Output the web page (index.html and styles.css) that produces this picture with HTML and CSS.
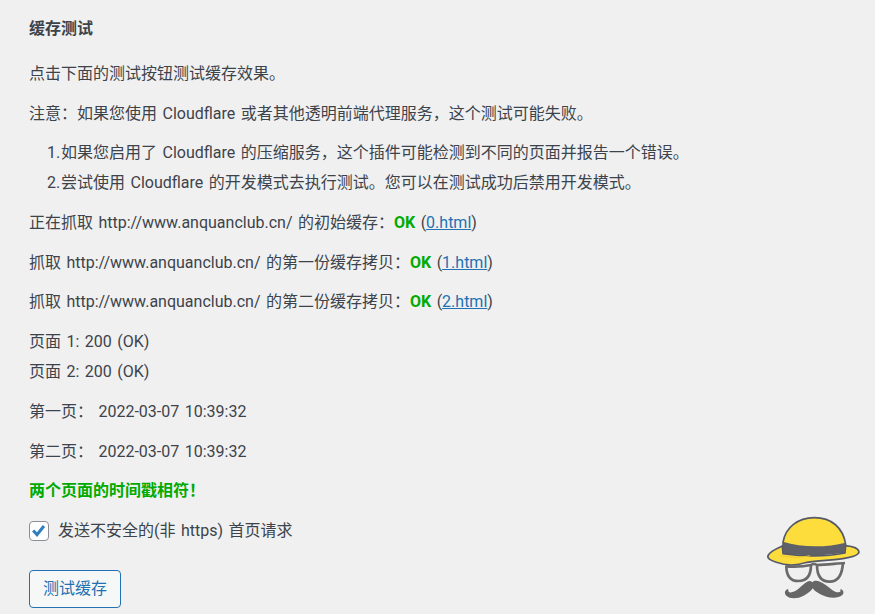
FILE: index.html
```html
<!DOCTYPE html>
<html>
<head>
<meta name="viewport" content="width=device-width, initial-scale=1.0">
<title>缓存测试</title>
<link rel="stylesheet" href="styles.css">
</head>
<body>
<div class="wrap">
  <h3 class="title">缓存测试</h3>
  <p>点击下面的测试按钮测试缓存效果。</p>
  <p>注意：如果您使用 Cloudflare 或者其他透明前端代理服务，这个测试可能失败。</p>
  <ol>
    <li>如果您启用了 Cloudflare 的压缩服务，这个插件可能检测到不同的页面并报告一个错误。</li>
    <li>尝试使用 Cloudflare 的开发模式去执行测试。您可以在测试成功后禁用开发模式。</li>
  </ol>
  <p>正在抓取 http://www.anquanclub.cn/ 的初始缓存：<span class="ok">OK</span> (<a href="#">0.html</a>)</p>
  <p>抓取 http://www.anquanclub.cn/ 的第一份缓存拷贝：<span class="ok">OK</span> (<a href="#">1.html</a>)</p>
  <p>抓取 http://www.anquanclub.cn/ 的第二份缓存拷贝：<span class="ok">OK</span> (<a href="#">2.html</a>)</p>
  <p>页面 1: 200 (OK)<br>页面 2: 200 (OK)</p>
  <p>第一页： 2022-03-07 10:39:32</p>
  <p>第二页： 2022-03-07 10:39:32</p>
  <p class="ok">两个页面的时间戳相符！</p>
  <p class="check-row">
    <span class="checkbox">
      <svg viewBox="0 0 20 20" width="18" height="18"><path d="M3.5 9.5 7.8 14 15.5 4.5" fill="none" stroke="#2f7fc1" stroke-width="3.4"/></svg>
    </span>
    <label>发送不安全的(非 https) 首页请求</label>
  </p>
  <button class="button">测试缓存</button>
</div>

<!-- hat logo, floats over the page corner -->
<svg class="logo" viewBox="0 0 360 327" width="120" height="109">
  <g fill="none" stroke="#6a6a6a" stroke-width="8">
    <path d="M94 182C94 212 106 228 130 228C156 228 168 210 168 180"/>
    <path d="M186 180C186 212 198 230 224 230C250 230 262 206 264 172"/>
    <path d="M92 184C120 186 150 184 168 180C174 176 180 176 186 180C210 180 240 176 270 174"/>
  </g>
  <path d="M84 112C92 66 128 39 178 38C230 38 264 68 272 118L270 142L86 146Z" fill="#fddd3c" stroke="#565a66" stroke-width="5"/>
  <path d="M82 122C78 127 50 134 40 150C34 160 46 166 64 172C92 182 126 182 156 172C190 166 236 166 268 160C292 156 312 150 312 140C310 130 292 124 272 122L270 144C210 156 140 154 84 146Z" fill="#fddd3c" stroke="#565a66" stroke-width="5" stroke-linejoin="round"/>
  <path d="M84 110C140 128 214 128 272 113L270 141C212 155 140 154 85 143Z" fill="#5f6068"/>
  <path d="M76 152C110 158 140 158 164 152" fill="none" stroke="#f2c92e" stroke-width="3"/>
  <path d="M172 232C182 222 196 230 212 240C226 250 238 262 250 262C256 262 258 258 256 252C266 254 268 264 262 270C246 284 214 278 196 268C186 262 178 258 173 250C168 258 160 264 146 272C128 282 104 282 94 272C86 264 90 254 100 252C98 258 102 264 110 262C124 260 134 248 146 238C156 230 164 224 172 232Z" fill="#666"/>
</svg>
</body>
</html>
```
FILE: styles.css
```css
* {box-sizing: border-box;}

html, body {
  height: 100%;
  margin: 0;
  overflow: hidden;
}

body {
  background: #f0f0f1;
  color: #3c434a;
  font-family: Roboto, "Noto Sans CJK SC", sans-serif;
  font-size: 16px;
  line-height: 30px;
  word-spacing: 1.5px;
}

.wrap {
  padding: 14px 29px 0;
}

.title {
  margin: 0 0 15px;
  font-size: 16px;
  font-weight: 600;
}

p {
  margin: 9.7px 0;
}

.title + p {
  margin-top: 0;
}

ol {
  margin: 9.7px 0;
  padding: 0 0 0 18px;
  list-style: none;
  counter-reset: step;
}

li {
  counter-increment: step;
}

li::before {
  content: counter(step) ".";
  display: inline-block;
  width: 14px;
}

a {
  color: #2271b1;
}

.ok {
  color: #00aa00;
  font-weight: 700;
}

.check-row {
  display: flex;
  align-items: center;
  gap: 9px;
}

.checkbox {
  width: 20px;
  height: 20px;
  background: #fff;
  border: 1px solid #8c8f94;
  border-radius: 4px;
  display: flex;
  align-items: center;
  justify-content: center;
}

.button {
  display: block;
  height: 38px;
  margin-top: 24px;
  padding: 0 13px;
  background: #f6f7f7;
  border: 1px solid #2271b1;
  border-radius: 4px;
  color: #2271b1;
  font: inherit;
  line-height: 36px;
}

/* sits over the corner, not part of the flow */
.logo {
  position: absolute;
  left: 755px;
  top: 505px;
}
```
